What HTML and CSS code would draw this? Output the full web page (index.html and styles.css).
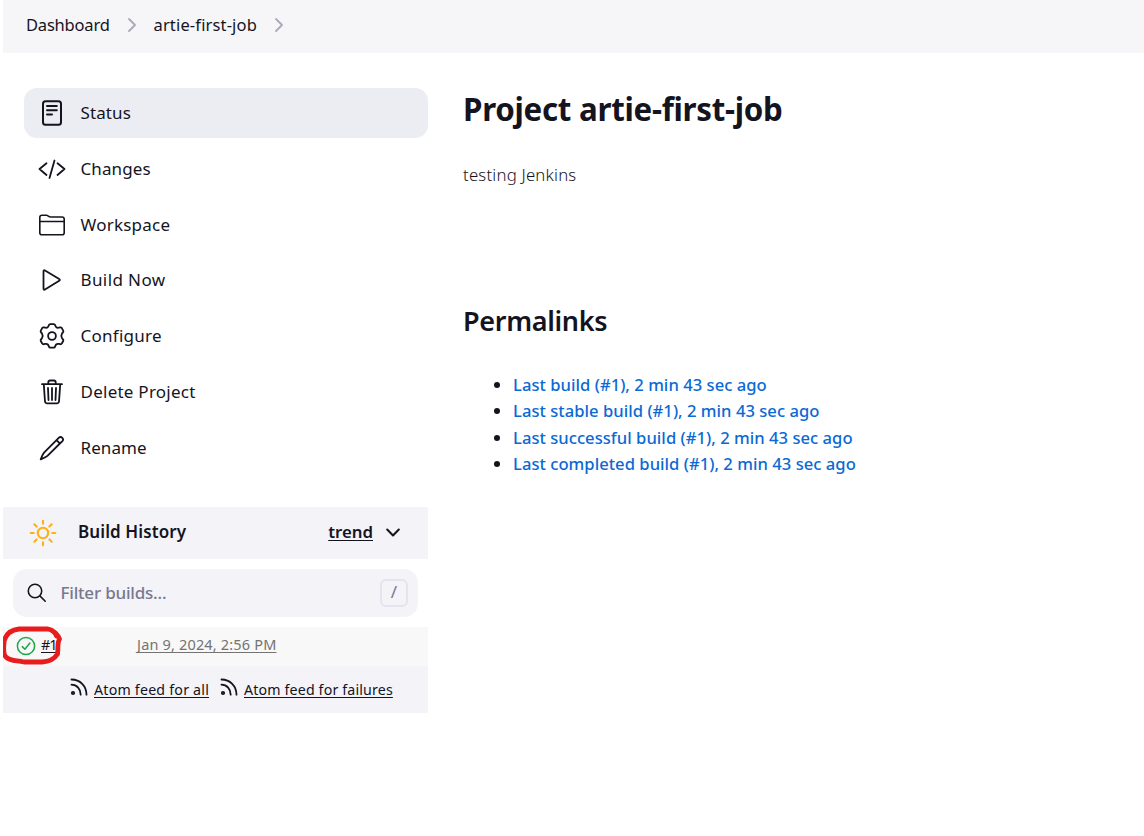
FILE: index.html
```html
<!DOCTYPE html>
<html lang="en">
<head>
<meta charset="utf-8">
<title>artie-first-job [Jenkins]</title>
<link rel="stylesheet" href="styles.css">
</head>
<body>
<nav class="breadcrumbs">
  <a class="crumb crumb-home">Dashboard</a>
  <svg class="crumb-arrow" viewBox="0 0 10 16"><path d="M2 2l6 6-6 6"/></svg>
  <a class="crumb crumb-job">artie-first-job</a>
  <svg class="crumb-arrow" viewBox="0 0 10 16"><path d="M2 2l6 6-6 6"/></svg>
</nav>
<div class="page">
  <aside class="side">
    <div class="tasks">
      <a class="task active">
        <svg class="icon" viewBox="0 0 28 28"><rect x="5" y="2.300" width="18" height="23.400" rx="2.500" stroke-width="2"/><path stroke-width="2" d="M9 7h9.800M9 11.300h9.800M9 15.600h5"/></svg>
        <span class="t-status">Status</span></a>
      <a class="task">
        <svg class="icon" viewBox="0 0 28 28"><path d="M8.500 8.300L1.500 14l7 6M19.500 8.300l7 5.700-7 6M16.500 5.500l-5 17.500"/></svg>
        <span class="t-changes">Changes</span></a>
      <a class="task">
        <svg class="icon" viewBox="0 0 28 28"><path stroke-width="1.600" d="M1.800 10.500V6.500a2.200 2.200 0 0 1 2.200-2.200h4.500c1.500 0 2.200 1.700 4 1.700h11.500a2.200 2.200 0 0 1 2.200 2.200v13.500a2 2 0 0 1-2 2H3.800a2 2 0 0 1-2-2zH26"/></svg>
        <span class="t-workspace">Workspace</span></a>
      <a class="task">
        <svg class="icon" viewBox="0 0 28 28"><path d="M5.500 5.300v17.400c0 1 .7 1.300 1.500.8l14.200-8.700c.8-.5.800-1.200 0-1.700L7 4.500c-.8-.5-1.500-.2-1.500.8z"/></svg>
        <span class="t-build">Build Now</span></a>
      <a class="task">
        <svg class="icon" viewBox="0 0 28 28"><circle cx="14" cy="14" r="3.900"/><path d="M12.200 2.200h3.600q1 0 1.400 1.200c.5 2 1.600 2.700 3.600 2.300l1.400-.3q1-.2 1.600.7l1.400 2.500q.5.900-.2 1.700l-.9 1q-1.500 2.500 0 5l.9 1q.7.800.2 1.700l-1.400 2.500q-.6.900-1.600.7l-1.400-.3c-2-.4-3.100.3-3.600 2.300q-.4 1.500-1.400 1.500h-3.600q-1 0-1.400-1.500c-.5-2-1.600-2.700-3.600-2.300l-1.400.3q-1 .2-1.600-.7l-1.400-2.500q-.5-.9.200-1.700l.9-1q1.500-2.500 0-5l-.9-1q-.7-.8-.2-1.700l1.400-2.500q.6-.9 1.600-.7l1.400.3c2 .4 3.100-.3 3.600-2.300q.4-1.200 1.400-1.200z"/></svg>
        <span class="t-configure">Configure</span></a>
      <a class="task">
        <svg class="icon" viewBox="0 0 28 28"><path d="M4 6.200h20M5.800 6.500l1.200 17.200a2 2 0 0 0 2 1.700h10a2 2 0 0 0 2-1.700l1.200-17.200M10.300 6V4.200a1.700 1.700 0 0 1 1.700-1.700h4a1.700 1.700 0 0 1 1.700 1.700V6M10 10l.5 12M14 10v12M18 10l-.5 12"/></svg>
        <span class="t-delete">Delete Project</span></a>
      <a class="task">
        <svg class="icon" viewBox="0 0 28 28"><path d="M18.500 6.100L6.300 18.300c-.8.800-2.500 4.200-3.600 7 2.800-1.100 6.200-2.800 7-3.600L21.900 9.500M18.500 6.100l2.200-2.200c1-1 2.500-1.200 3.600-.1s.9 2.500-.1 3.500L21.900 9.500zM18.500 6.100l3.400 3.400"/></svg>
        <span class="t-rename">Rename</span></a>
    </div>
    <section class="history">
      <header class="history-head">
        <svg class="sun" viewBox="0 0 28 28"><circle cx="14" cy="14" r="5.200"/><path d="M14 1.700V4.800M14 23.200v3.100M1.700 14H4.800M23.200 14h3.100M5.300 5.300l2.300 2.300M20.400 20.400l2.300 2.300M22.700 5.300l-2.300 2.300M7.600 20.400l-2.300 2.300"/></svg>
        <strong class="history-title">Build History</strong>
        <a class="trend">trend</a>
        <svg class="chevron" viewBox="0 0 14 9"><path d="M1.200 1.500l5.800 6 5.800-6"/></svg>
      </header>
      <div class="search">
        <svg class="glass" viewBox="0 0 20 20"><circle cx="8.200" cy="8.200" r="6.900"/><path d="M13.200 13.200l5.500 5.500"/></svg>
        <span class="placeholder">Filter builds...</span>
        <kbd class="key"><span class="slash">/</span></kbd>
      </div>
      <div class="build">
        <svg class="ok" viewBox="0 0 20 20"><circle cx="10" cy="10" r="8.600"/><path d="M6.300 10.600l2.600 2.600 5-6.200"/></svg>
        <a class="number">#1</a>
        <a class="date">Jan 9, 2024, 2:56 PM</a>
        <svg class="marker" viewBox="0 0 64 40"><path d="M56.500 10C55 6 53 4 48 3H19C10 4 6 8 4.200 15C3.200 24 3.500 29 6 31C11 36 17 34 24 36H42C50 35.500 55 32 57.500 28C58.500 22 57 17 59.500 13C58 9 54 4 48 3"/></svg>
      </div>
      <footer class="feeds">
        <svg class="rss" viewBox="0 0 18 18"><circle cx="3" cy="15" r="1.200"/><path d="M1.500 6.700C7 6.700 10.700 11 10.700 16.700M1.500 1.500C10 1.500 16.500 8 16.500 16.700"/></svg>
        <a class="feed feed-all">Atom feed for all</a>
        <svg class="rss" viewBox="0 0 18 18"><circle cx="3" cy="15" r="1.200"/><path d="M1.500 6.700C7 6.700 10.700 11 10.700 16.700M1.500 1.500C10 1.500 16.500 8 16.500 16.700"/></svg>
        <a class="feed feed-fail">Atom feed for failures</a>
      </footer>
    </section>
  </aside>
  <main class="main">
    <h1 class="title">Project artie-first-job</h1>
    <p class="description">testing Jenkins</p>
    <h2 class="subtitle">Permalinks</h2>
    <ul class="links">
      <li><a>Last build (#1), 2 min 43 sec ago</a></li>
      <li><a>Last stable build (#1), 2 min 43 sec ago</a></li>
      <li><a>Last successful build (#1), 2 min 43 sec ago</a></li>
      <li><a>Last completed build (#1), 2 min 43 sec ago</a></li>
    </ul>
  </main>
</div>
</body>
</html>
```
FILE: styles.css
```css
* { box-sizing: border-box; }
body {
  margin: 0 0 0 3px;
  background: #fff;
  color: #14141f;
  font: 450 17px/24px "Noto Sans", sans-serif;
}
svg { flex: none; fill: none; stroke: currentColor; stroke-linecap: round; stroke-linejoin: round; }
.breadcrumbs {
  display: flex;
  align-items: center;
  height: 53px;
  padding: 0 0 4px 23px;
  background: #f6f6f8;
  font-size: 16.5px;
  white-space: nowrap;
}
.crumb-home { width: 101px; letter-spacing: -0.2px; }
.crumb-job { width: 120px; letter-spacing: 0.15px; }
.crumb-arrow { width: 10px; height: 16px; stroke: #a9a9bc; stroke-width: 1.8; }
.crumb-home + .crumb-arrow { margin-right: 16.5px; }
.page { display: flex; }
.side { width: 425px; padding-top: 35px; }
.tasks { display: flex; flex-direction: column; gap: 5.8px; padding-left: 21px; }
.task { display: flex; align-items: center; gap: 14.5px; height: 50px; padding-left: 14px; border-radius: 13px; letter-spacing: 0.1px; }
.task.active { background: #ecedf3; }
.t-workspace { letter-spacing: 0.22px; }
.t-build { letter-spacing: 0.4px; }
.t-configure { letter-spacing: 0.25px; }
.t-delete { letter-spacing: 0.25px; }
.icon { width: 28px; height: 28px; stroke-width: 1.8; }
.history { margin-top: 34px; }
.history-head { display: flex; align-items: center; height: 52px; padding: 0 28px 0 26px; background: #f3f3f8; font-weight: 650; }
.sun { width: 28px; height: 28px; color: #ffb014; stroke-width: 2.1; }
.history-title { margin: 0 0 2px 21px; font-size: 17px; font-weight: 650; letter-spacing: 0.1px; }
.trend { margin: 0 0 2px auto; font-size: 16.8px; text-decoration: underline; text-underline-offset: 2px; }
.chevron { width: 14px; height: 9px; margin-left: 13px; stroke-width: 2; }
.search { display: flex; align-items: center; height: 48px; margin: 10px; padding: 0 10px 0 14px; border-radius: 14px; background: #f3f3f8; }
.glass { width: 19.5px; height: 19.5px; stroke-width: 1.6; }
.placeholder { margin-left: 14px; color: #78788f; font-weight: 500; letter-spacing: -0.2px; }
.key { display: grid; place-items: center; width: 28px; height: 28px; margin-left: auto; border: 2px solid #e4e4ee; border-radius: 6px; color: #78788f; font: 400 17px/22px "Noto Sans", sans-serif; }
.slash { padding-bottom: 2px; }
.build { position: relative; display: flex; align-items: center; height: 39px; padding: 0 0 4px 13px; background: #f8f8f8; font-size: 14.5px; font-weight: 400; }
.ok { width: 20px; height: 20px; color: #1ea64b; stroke-width: 1.5; margin-top: 4px; }
.number, .date, .feed { text-decoration: underline 1px; text-underline-offset: 2px; }
.number { width: 16px; margin-left: 5px; letter-spacing: -1.2px; white-space: nowrap; }
.date { margin-left: 80px; color: #737373; white-space: nowrap; letter-spacing: 0.17px; }
.marker { position: absolute; left: -3px; top: -1px; width: 64px; height: 40px; color: #e81c1c; stroke-width: 4.8; }
.feeds { display: flex; align-items: center; height: 47px; padding-left: 67px; background: #f3f3f8; font-size: 14.2px; white-space: nowrap; }
.rss { width: 18px; height: 18px; margin-bottom: 4px; stroke-width: 1.8; }
.feed { margin: 1px 0 0 6px; letter-spacing: 0.16px; }
.feed-all { width: 115px; margin-right: 11px; letter-spacing: 0.22px; }
.main { padding: 36px 0 0 35px; white-space: nowrap; }
.title { margin: 0; font-size: 31.3px; font-weight: 670; line-height: 40px; letter-spacing: -0.28px; }
.description { margin: 34px 0 0; font-size: 16.8px; font-weight: 330; letter-spacing: 0.2px; }
.subtitle { margin: 116px 0 0; font-size: 27px; font-weight: 650; line-height: 36px; letter-spacing: -0.33px; }
.links { margin: 33px 0 0; padding-left: 50px; font-size: 16.6px; font-weight: 480; line-height: 26.4px; letter-spacing: 0.03px; }
.links a { color: #0b69d4; }
```
